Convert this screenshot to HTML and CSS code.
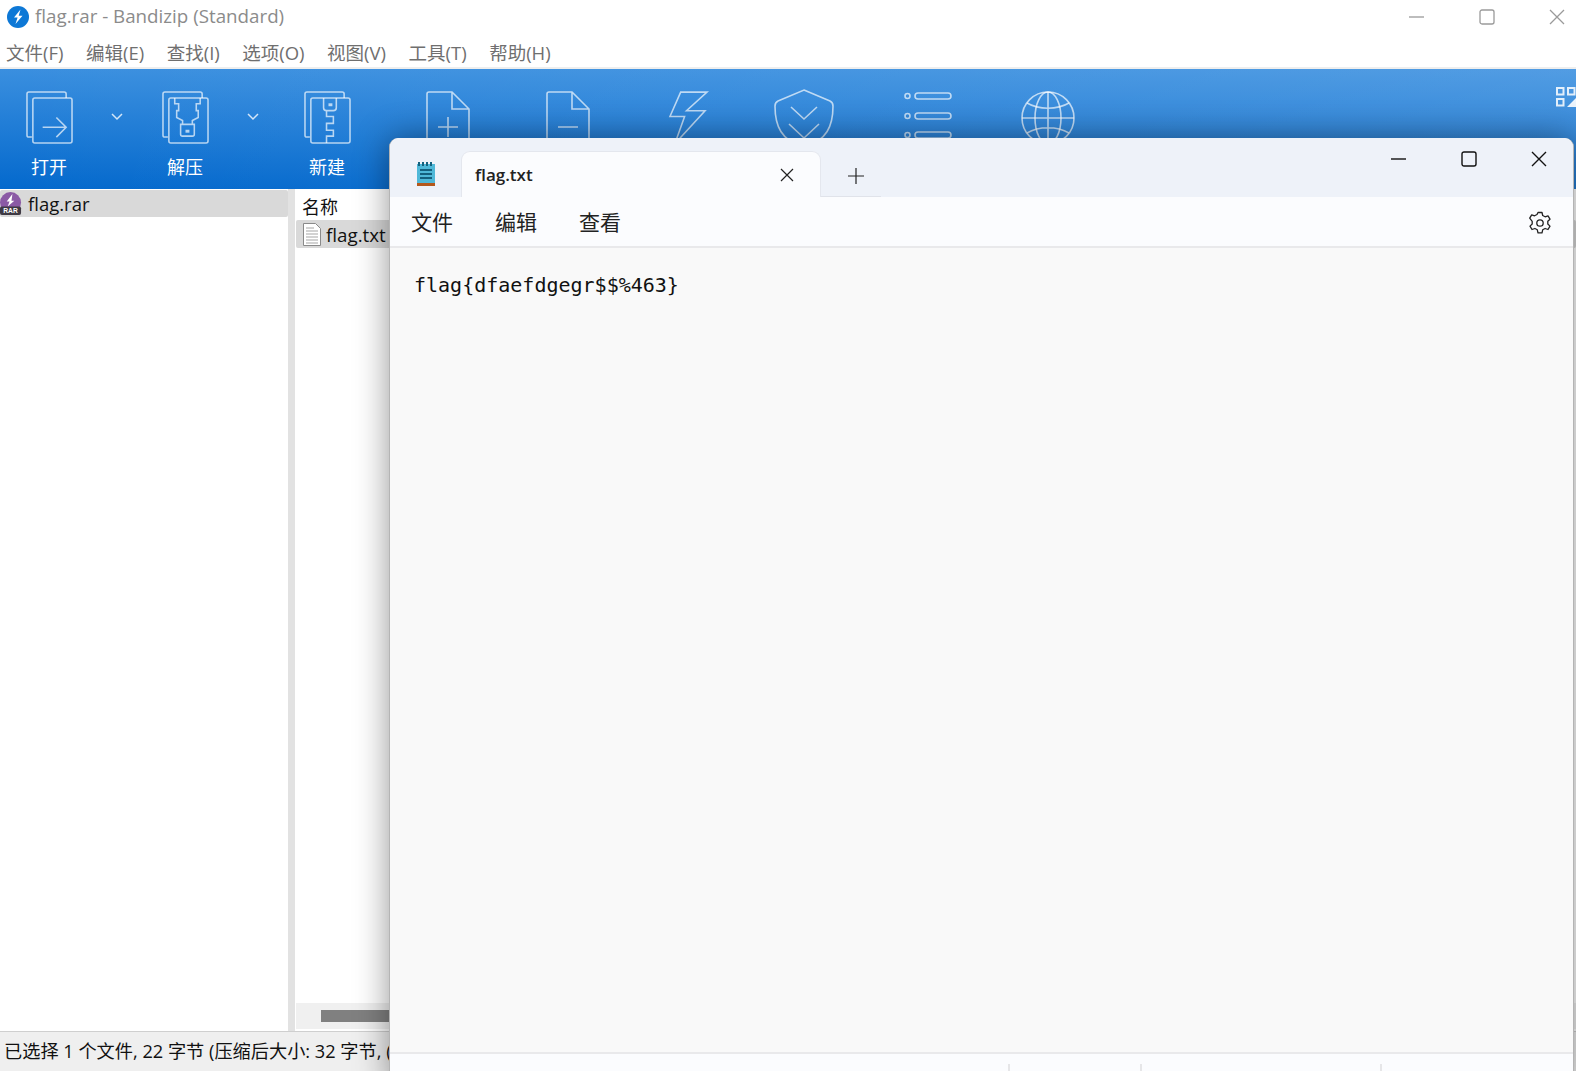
FILE: index.html
```html
<!DOCTYPE html>
<html lang="zh-CN">
<head>
<meta charset="utf-8">
<title>flag.rar - Bandizip (Standard)</title>
<link rel="stylesheet" href="styles.css">
</head>
<body>
<div class="bz">
  <header class="bz-title">
    <svg class="bz-logo" viewBox="0 0 22 22"><circle cx="11" cy="11" r="11" fill="#0d78d6"/><path d="M13.500 3.500 7 11.500h3.600L8.500 18l7-8.200h-3.800z" fill="#fff"/></svg>
    <span class="bz-title-text">flag.rar - Bandizip (Standard)</span>
    <div class="bz-controls">
      <svg class="ctl" viewBox="0 0 16 16"><path d="M0 8h15"/></svg>
      <svg class="ctl" viewBox="0 0 16 16"><rect x="1" y="1" width="14" height="14" rx="2"/></svg>
      <svg class="ctl" viewBox="0 0 16 16"><path d="M1 1l14 14M15 1 1 15"/></svg>
    </div>
  </header>
  <nav class="bz-menu">
    <span>文件(F)</span><span>编辑(E)</span><span>查找(I)</span><span>选项(O)</span><span>视图(V)</span><span>工具(T)</span><span>帮助(H)</span>
  </nav>
  <div class="toolbar">
    <div class="tool tool-s">
      <svg class="tool-icon" viewBox="0 0 48 54"><path d="M6 47H3a2 2 0 0 1-2-2V3a2 2 0 0 1 2-2h36a2 2 0 0 1 2 2v4"/><rect x="7" y="7" width="40" height="46" rx="2"/><path d="M17 37h24M31 27l10 10-10 10"/></svg>
      <span class="tool-label">打开</span>
    </div>
    <div class="chev"><svg viewBox="0 0 12 8"><path d="M1 1l5 5 5-5"/></svg></div>
    <div class="tool tool-s">
      <svg class="tool-icon" viewBox="0 0 48 54"><path d="M6 47H3a2 2 0 0 1-2-2V3a2 2 0 0 1 2-2h36a2 2 0 0 1 2 2v4"/><rect x="7" y="7" width="40" height="46" rx="2"/><path d="M13 7v6h4v7h-2v7l6 3v4h-2v10a2 2 0 0 0 2 2h10a2 2 0 0 0 2-2V34h-2v-4l6-3v-7h-2v-7h4V7M19 34h14"/><path class="thick" d="M24 41h4"/></svg>
      <span class="tool-label">解压</span>
    </div>
    <div class="chev"><svg viewBox="0 0 12 8"><path d="M1 1l5 5 5-5"/></svg></div>
    <div class="tool tool-n">
      <svg class="tool-icon" viewBox="0 0 48 54"><path d="M6 47H3a2 2 0 0 1-2-2V3a2 2 0 0 1 2-2h36a2 2 0 0 1 2 2v4"/><rect x="7" y="7" width="40" height="46" rx="2"/><path d="M20 7v10a3 3 0 0 0 3 3h7a3 3 0 0 0 3-3V7M23 20v6h7v7h-7v7h7v6h-7v7"/><path class="thick" d="M25 14h4"/></svg>
      <span class="tool-label">新建</span>
    </div>
    <div class="tool tool-first">
      <svg class="tool-icon tool-file" viewBox="0 0 44 54"><path d="M3 53a2 2 0 0 1-2-2V3a2 2 0 0 1 2-2h23l17 17v33a2 2 0 0 1-2 2zM26 1v17h17M12 36h20M22 26v20"/></svg>
    </div>
    <div class="tool">
      <svg class="tool-icon tool-file" viewBox="0 0 44 54"><path d="M3 53a2 2 0 0 1-2-2V3a2 2 0 0 1 2-2h23l17 17v33a2 2 0 0 1-2 2zM26 1v17h17M12 36h20"/></svg>
    </div>
    <div class="tool">
      <svg class="tool-icon tool-bolt" viewBox="0 0 40 54"><path d="M12 1h27L18 20h19L6 54l10-28H1z"/></svg>
    </div>
    <div class="tool tool-shield">
      <svg class="tool-icon tool-guard" viewBox="0 0 60 60"><path d="M30 1l26 11c2 1 3 2 3 5 0 20-6 34-29 42C7 51 1 37 1 17c0-3 1-4 3-5zM17 18l13 12 13-12M15 35l15 14 15-14"/></svg>
    </div>
    <div class="tool">
      <svg class="tool-icon tool-wide" viewBox="0 0 48 54"><circle cx="3.500" cy="5" r="2.500"/><rect x="11" y="2" width="36" height="6" rx="3"/><circle cx="3.500" cy="25" r="2.500"/><rect x="11" y="22" width="36" height="6" rx="3"/><circle cx="3.500" cy="44" r="2.500"/><rect x="11" y="41" width="36" height="6" rx="3"/></svg>
    </div>
    <div class="tool">
      <svg class="tool-icon tool-wide" viewBox="0 0 54 54"><circle cx="27" cy="27" r="26"/><ellipse cx="27" cy="27" rx="13" ry="26"/><path d="M27 1v52M1 27h52M6 12c12 7 30 7 42 0M6 42c12-7 30-7 42 0"/></svg>
    </div>
    <svg class="grid-icon" viewBox="0 0 20 20"><rect x="1" y="1" width="6.500" height="6.500"/><rect x="12" y="1" width="6.500" height="6.500"/><rect x="1" y="12" width="6.500" height="6.500"/><path class="solid" d="M20 11v9h-9z"/></svg>
  </div>
  <main class="bz-main">
    <aside class="tree">
      <div class="tree-row">
        <svg class="rar-icon" viewBox="0 0 23 25"><circle cx="11" cy="11" r="11" fill="#8b5aa5"/><path d="M13 2 7 10h3l-2 5 7-6h-3z" fill="#fff"/><rect x="0" y="15" width="22" height="9" rx="2" fill="#3f3a44"/><text x="11" y="22.300" class="rar-text">RAR</text></svg>
        <span>flag.rar</span>
      </div>
    </aside>
    <div class="gutter"></div>
    <section class="list">
      <div class="list-head">名称</div>
      <div class="list-row">
        <svg class="doc-icon" viewBox="0 0 18 23"><path d="M.5.500h12l5 5v17H.5z" fill="#fff" stroke="#8a8a8a"/><path d="M3 5h8M3 8h12M3 11h12M3 14h12M3 17h12M3 20h12" stroke="#a5a5a5"/></svg>
        <span>flag.txt</span>
      </div>
      <div class="list-space"></div>
      <div class="hscroll"><div class="hthumb"></div></div>
    </section>
  </main>
  <footer class="bz-status">已选择 1 个文件, 22 字节 (压缩后大小: 32 字节, (</footer>
</div>

<div class="np">
  <div class="np-title">
    <svg class="np-icon" viewBox="0 0 18 24"><rect x="0" y="2" width="18" height="19" fill="#4fb8d8"/><path d="M2 0v4M6 0v4M10 0v4M14 0v4" stroke="#14627f" stroke-width="2"/><path d="M3 8h12M3 12h12M3 16h12" stroke="#14607e" stroke-width="2"/><rect x="0" y="21" width="18" height="3" fill="#b4581c"/></svg>
    <div class="np-tabwrap">
      <div class="np-tab">
        <span>flag.txt</span>
        <svg class="tab-x" viewBox="0 0 14 14"><path d="M1 1l12 12M13 1 1 13"/></svg>
      </div>
      <div class="np-new"><svg viewBox="0 0 16 16"><path d="M0 8h16M8 0v16"/></svg></div>
    </div>
    <div class="np-controls">
      <svg class="ctl-dark" viewBox="0 0 16 16"><path d="M0 8h15"/></svg>
      <svg class="ctl-dark" viewBox="0 0 16 16"><rect x="1" y="1" width="14" height="14" rx="2"/></svg>
      <svg class="ctl-dark" viewBox="0 0 16 16"><path d="M1 1l14 14M15 1 1 15"/></svg>
    </div>
  </div>
  <div class="np-menu">
    <span>文件</span><span>编辑</span><span>查看</span>
    <svg class="gear" viewBox="0 0 24 24"><path d="M10 1.500h4l.7 3 2.400 1.300 2.900-1 2 3.400-2.200 2.100v2.700l2.200 2.100-2 3.400-2.900-1-2.400 1.300-.7 3h-4l-.7-3-2.400-1.300-2.900 1-2-3.400 2.200-2.100v-2.700L1.700 7.200l2-3.400 2.900 1L9 3.500z" fill="none" stroke="#222" stroke-width="1.300" stroke-linejoin="round"/><circle cx="12" cy="12" r="3.200" fill="none" stroke="#222" stroke-width="1.300"/></svg>
  </div>
  <div class="np-body">flag{dfaefdgegr$$%463}</div>
  <div class="np-status">
    <span class="np-pos">行</span><span class="np-pos">列</span>
    <i class="tick tick-1"></i><i class="tick tick-2"></i><i class="tick tick-3"></i>
  </div>
</div>
</body>
</html>
```
FILE: styles.css
```css
* { box-sizing: border-box; }
html, body { margin: 0; height: 100%; overflow: hidden; background: #fff; }
body { position: relative; font-family: "Open Sans", "Noto Sans CJK SC", sans-serif; color: #111; }

.bz { display: flex; flex-direction: column; height: 1071px; }
.bz-title { display: flex; align-items: center; height: 33px; padding-left: 7px; flex: none; }
.bz-logo { width: 22px; height: 22px; }
.bz-title-text { margin: -2px 0 0 6px; font-size: 18.750px; color: #8b8b8b; }
.bz-controls { margin-left: auto; display: flex; gap: 54px; padding-right: 11px; }
.ctl { width: 16px; height: 16px; fill: none; stroke: #9a9a9a; stroke-width: 1.300; }
.bz-menu { display: flex; gap: 22.500px; height: 36px; padding: 3px 0 0 6px; flex: none; font-size: 18.500px; line-height: 33px; color: #6f6f6f; border-bottom: 2px solid #eeeeee; }
.toolbar { position: relative; display: flex; height: 120px; flex: none; padding-top: 22px;
  background: linear-gradient(to right, rgba(255,255,255,0), rgba(255,255,255,.12)), linear-gradient(to bottom, #3a8fdf, #0469cd); }
.tool { width: 120px; display: flex; flex-direction: column; align-items: center; flex: none; }
.tool-s { width: 98px; }
.tool-n { width: 110px; }
.tool-first { margin-left: 6px; }
.tool-shield { padding-right: 8px; }
.tool-icon { width: 47px; height: 53px; fill: none; stroke: rgba(255,255,255,.68); stroke-width: 1.600; overflow: visible; }
.thick { stroke-width: 3; }
.tool-file { width: 44px; height: 54px; }
.tool-bolt { width: 39px; }
.tool-wide { width: 54px; height: 54px; }
.tool-guard { width: 60px; height: 60px; margin-top: -2px; }
.tool-label { margin-top: 10px; font-size: 18px; line-height: 26px; color: #fff; }
.chev { width: 38px; flex: none; display: flex; justify-content: center; padding-top: 22px; }
.chev svg { width: 12px; height: 8px; fill: none; stroke: rgba(255,255,255,.8); stroke-width: 1.500; }
.grid-icon { position: absolute; right: 0; top: 18px; width: 20px; height: 20px; fill: none; stroke: rgba(255,255,255,.85); stroke-width: 2; }
.grid-icon .solid { fill: rgba(255,255,255,.9); stroke: none; }

.bz-main { flex: 1; display: flex; min-height: 0; }
.tree { width: 288px; flex: none; padding-top: 1px; }
.tree-row { display: flex; align-items: center; height: 27px; background: #d9d9d9; border-radius: 2px; font-size: 18.500px; }
.tree-row span { margin-left: 6px; }
.rar-icon { width: 22px; height: 24px; }
.rar-text { font: bold 7px "Liberation Sans", sans-serif; fill: #fff; text-anchor: middle; }
.gutter { width: 7px; flex: none; background: #e2e2e2; }
.list { flex: 1; display: flex; flex-direction: column; padding-left: 1px; border-bottom: 2px solid #fff; min-width: 0; }
.list-head { height: 31px; padding: 4px 0 0 6px; font-size: 18px; line-height: 28px; }
.list-row { display: flex; align-items: center; height: 28px; background: #d9d9d9; padding-left: 7px; font-size: 18.750px; border-radius: 2px; }
.list-row span { margin-left: 5px; }
.doc-icon { width: 18px; height: 23px; }
.list-space { flex: 1; }
.hscroll { height: 26px; background: #f0f0f0; padding: 7px 0 0 25px; }
.hthumb { width: 120px; height: 12px; background: #808080; }
.bz-status { height: 40px; flex: none; padding-left: 4px; background: #efefef; border-top: 1px solid #cfcfcf; font-size: 18.200px; line-height: 38px; white-space: nowrap; }

.np { position: absolute; left: 389px; top: 138px; right: 2px; height: 950px; display: flex; flex-direction: column;
  background: #f9f9f9; border-radius: 9px 9px 0 0; border-left: 1px solid #b4b4b4; border-right: 1px solid #b4b4b4;
  box-shadow: 0 0 34px rgba(0,0,0,.42); }
.np-title { display: flex; align-items: flex-start; height: 59px; flex: none; background: #eef2f9; border-radius: 9px 9px 0 0; position: relative; }
.np-icon { width: 18px; height: 24px; margin: 24px 0 0 27px; flex: none; }
.np-tabwrap { display: flex; align-items: flex-start; margin: 13px 0 0 26px; }
.np-tab { display: flex; align-items: center; justify-content: space-between; width: 360px; height: 46px; padding: 0 26px 0 13px;
  background: #fbfcfe; border: 1px solid #e4e7ee; border-bottom: 0; border-radius: 9px 9px 0 0; font-size: 17px; font-weight: 600; color: #222; }
.np-tab span { margin-top: -1px; }
.tab-x { width: 14px; height: 14px; fill: none; stroke: #222; stroke-width: 1.200; }
.np-new { width: 60px; height: 46px; padding: 17px 0 0 27px; border-bottom: 1px solid #e0e3ea; }
.np-new svg { display: block; width: 16px; height: 16px; fill: none; stroke: #222; stroke-width: 1.200; }
.np-controls { margin-left: auto; display: flex; gap: 54px; padding: 13px 26px 0 0; }
.ctl-dark { width: 16px; height: 16px; fill: none; stroke: #111; stroke-width: 1.400; }
.np-menu { display: flex; align-items: center; gap: 42px; height: 51px; flex: none; padding: 0 21px 2px; background: #fbfcfe; border-bottom: 2px solid #e9e9eb; font-size: 21px; color: #222; }
.gear { margin-left: auto; width: 24px; height: 24px; margin-top: 5px; }
.np-body { flex: none; height: 806px; padding: 22px 0 0 24px; font: 20px/30px "DejaVu Sans Mono", monospace; color: #111; white-space: pre; border-bottom: 2px solid #e9e9eb; }
.np-status { position: relative; flex: 1; background: #fbfcfe; padding: 16px 0 0 32px; display: flex; gap: 45px; font-size: 14px; line-height: 18px; color: #333; }
.tick { position: absolute; top: 10px; width: 2px; height: 8px; background: #e6e6e8; }
.tick-1 { left: 618px; }
.tick-2 { left: 750px; }
.tick-3 { left: 990px; }
```
